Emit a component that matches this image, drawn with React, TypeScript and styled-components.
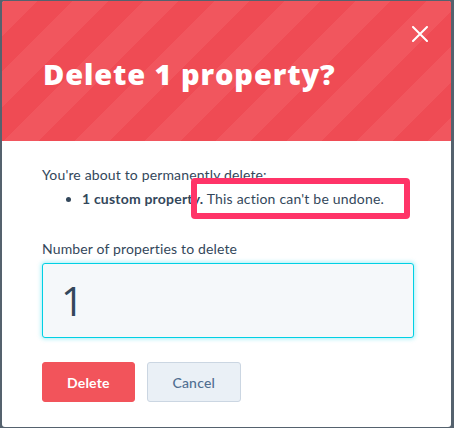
import React, { useState } from "react";
import styled, { createGlobalStyle } from "styled-components";

const GlobalStyle = createGlobalStyle`
  html, body {
    margin: 0;
    padding: 0;
    background: #55626e;
  }
  * {
    box-sizing: border-box;
  }
`;

const App: React.FC = () => {
  const [count, setCount] = useState("1");

  return (
    <Page>
      <GlobalStyle />
      <Dialog>
        <Header>
          <Title>Delete 1 property?</Title>
          <CloseButton aria-label="Close">
            <svg width="16" height="16" viewBox="0 0 16 16">
              <path
                d="M1 1L15 15M15 1L1 15"
                stroke="#fff"
                strokeWidth="2"
                strokeLinecap="round"
              />
            </svg>
          </CloseButton>
        </Header>
        <Body>
          <Notice>
            <Text>You're about to permanently delete:</Text>
            <List>
              <li>
                <strong>1 custom property.</strong> This action can't be undone.
              </li>
            </List>
            {/* 강조 표시 박스 */}
            <Highlight />
          </Notice>
          <Label htmlFor="count">Number of properties to delete</Label>
          <Input
            id="count"
            value={count}
            onChange={(e) => setCount(e.target.value)}
          />
          <ButtonRow>
            <Button variant="danger">Delete</Button>
            <Button variant="secondary">Cancel</Button>
          </ButtonRow>
        </Body>
      </Dialog>
    </Page>
  );
};

export default App;

const Page = styled.div`
  width: 454px;
  height: 428px;
  padding: 1px 3px 1px 2px;
  font-family: Lato, "Open Sans", sans-serif;
`;

const Dialog = styled.div`
  width: 449px;
  height: 426px;
  background: #fff;
  border-radius: 3px;
  overflow: hidden;
  display: flex;
  flex-direction: column;
`;

const Header = styled.div`
  position: relative;
  height: 140px;
  flex-shrink: 0;
  padding: 54px 0 0 41px;
  background-color: #ef4c55;
  background-image: repeating-linear-gradient(
    135deg,
    #f1565e 0px,
    #f1565e 25px,
    #ef4b54 25px,
    #ef4b54 50px
  );
`;

const Title = styled.h1`
  margin: 0;
  color: #fff;
  font-family: "Open Sans", sans-serif;
  font-size: 29px;
  font-weight: 800;
  line-height: 38px;
  letter-spacing: 0.9px;
`;

const CloseButton = styled.button`
  position: absolute;
  top: 24px;
  right: 22px;
  width: 18px;
  height: 18px;
  padding: 1px;
  border: none;
  background: none;
  cursor: pointer;
  display: flex;
`;

const Body = styled.div`
  padding: 22px 38px 0 40px;
  display: flex;
  flex-direction: column;
  color: #33475b;
  font-size: 14px;
  letter-spacing: 0.15px;
`;

const Notice = styled.div`
  position: relative;
`;

const Text = styled.p`
  margin: 0;
  line-height: 24px;
`;

const List = styled.ul`
  margin: 0;
  padding-left: 40px;
  line-height: 24px;
  letter-spacing: 0.2px;

  strong {
    font-weight: 700;
  }
`;

const Highlight = styled.div`
  position: absolute;
  left: 149px;
  top: 15px;
  width: 219px;
  height: 41px;
  border: 6px solid #ff3468;
  border-radius: 4px;
`;

const Label = styled.label`
  margin-top: 27px;
  line-height: 22px;
`;

const Input = styled.input`
  margin-top: 3px;
  width: 372px;
  height: 75px;
  padding: 0 18px;
  border: 1px solid #00d0e4;
  border-radius: 3px;
  background: #f5f8fa;
  box-shadow: 0 0 4px 1px rgba(0, 208, 228, 0.35);
  color: #33475b;
  font-family: "Open Sans", sans-serif;
  font-size: 40px;
  font-weight: 400;
  outline: none;
`;

const ButtonRow = styled.div`
  display: flex;
  gap: 12px;
  margin-top: 24px;
`;

const Button = styled.button<{ variant: "danger" | "secondary" }>`
  height: 40px;
  padding: 0 24px;
  border-radius: 3px;
  font-family: Lato, sans-serif;
  font-size: 14px;
  font-weight: ${(p) => (p.variant === "danger" ? 700 : 500)};
  letter-spacing: 0.2px;
  cursor: pointer;
  border: 1px solid
    ${(p) => (p.variant === "danger" ? "#f2545b" : "#cbd6e2")};
  background: ${(p) => (p.variant === "danger" ? "#f2545b" : "#eaf0f6")};
  color: ${(p) => (p.variant === "danger" ? "#fff" : "#506e91")};
  min-width: ${(p) => (p.variant === "danger" ? "92px" : "94px")};
`;
